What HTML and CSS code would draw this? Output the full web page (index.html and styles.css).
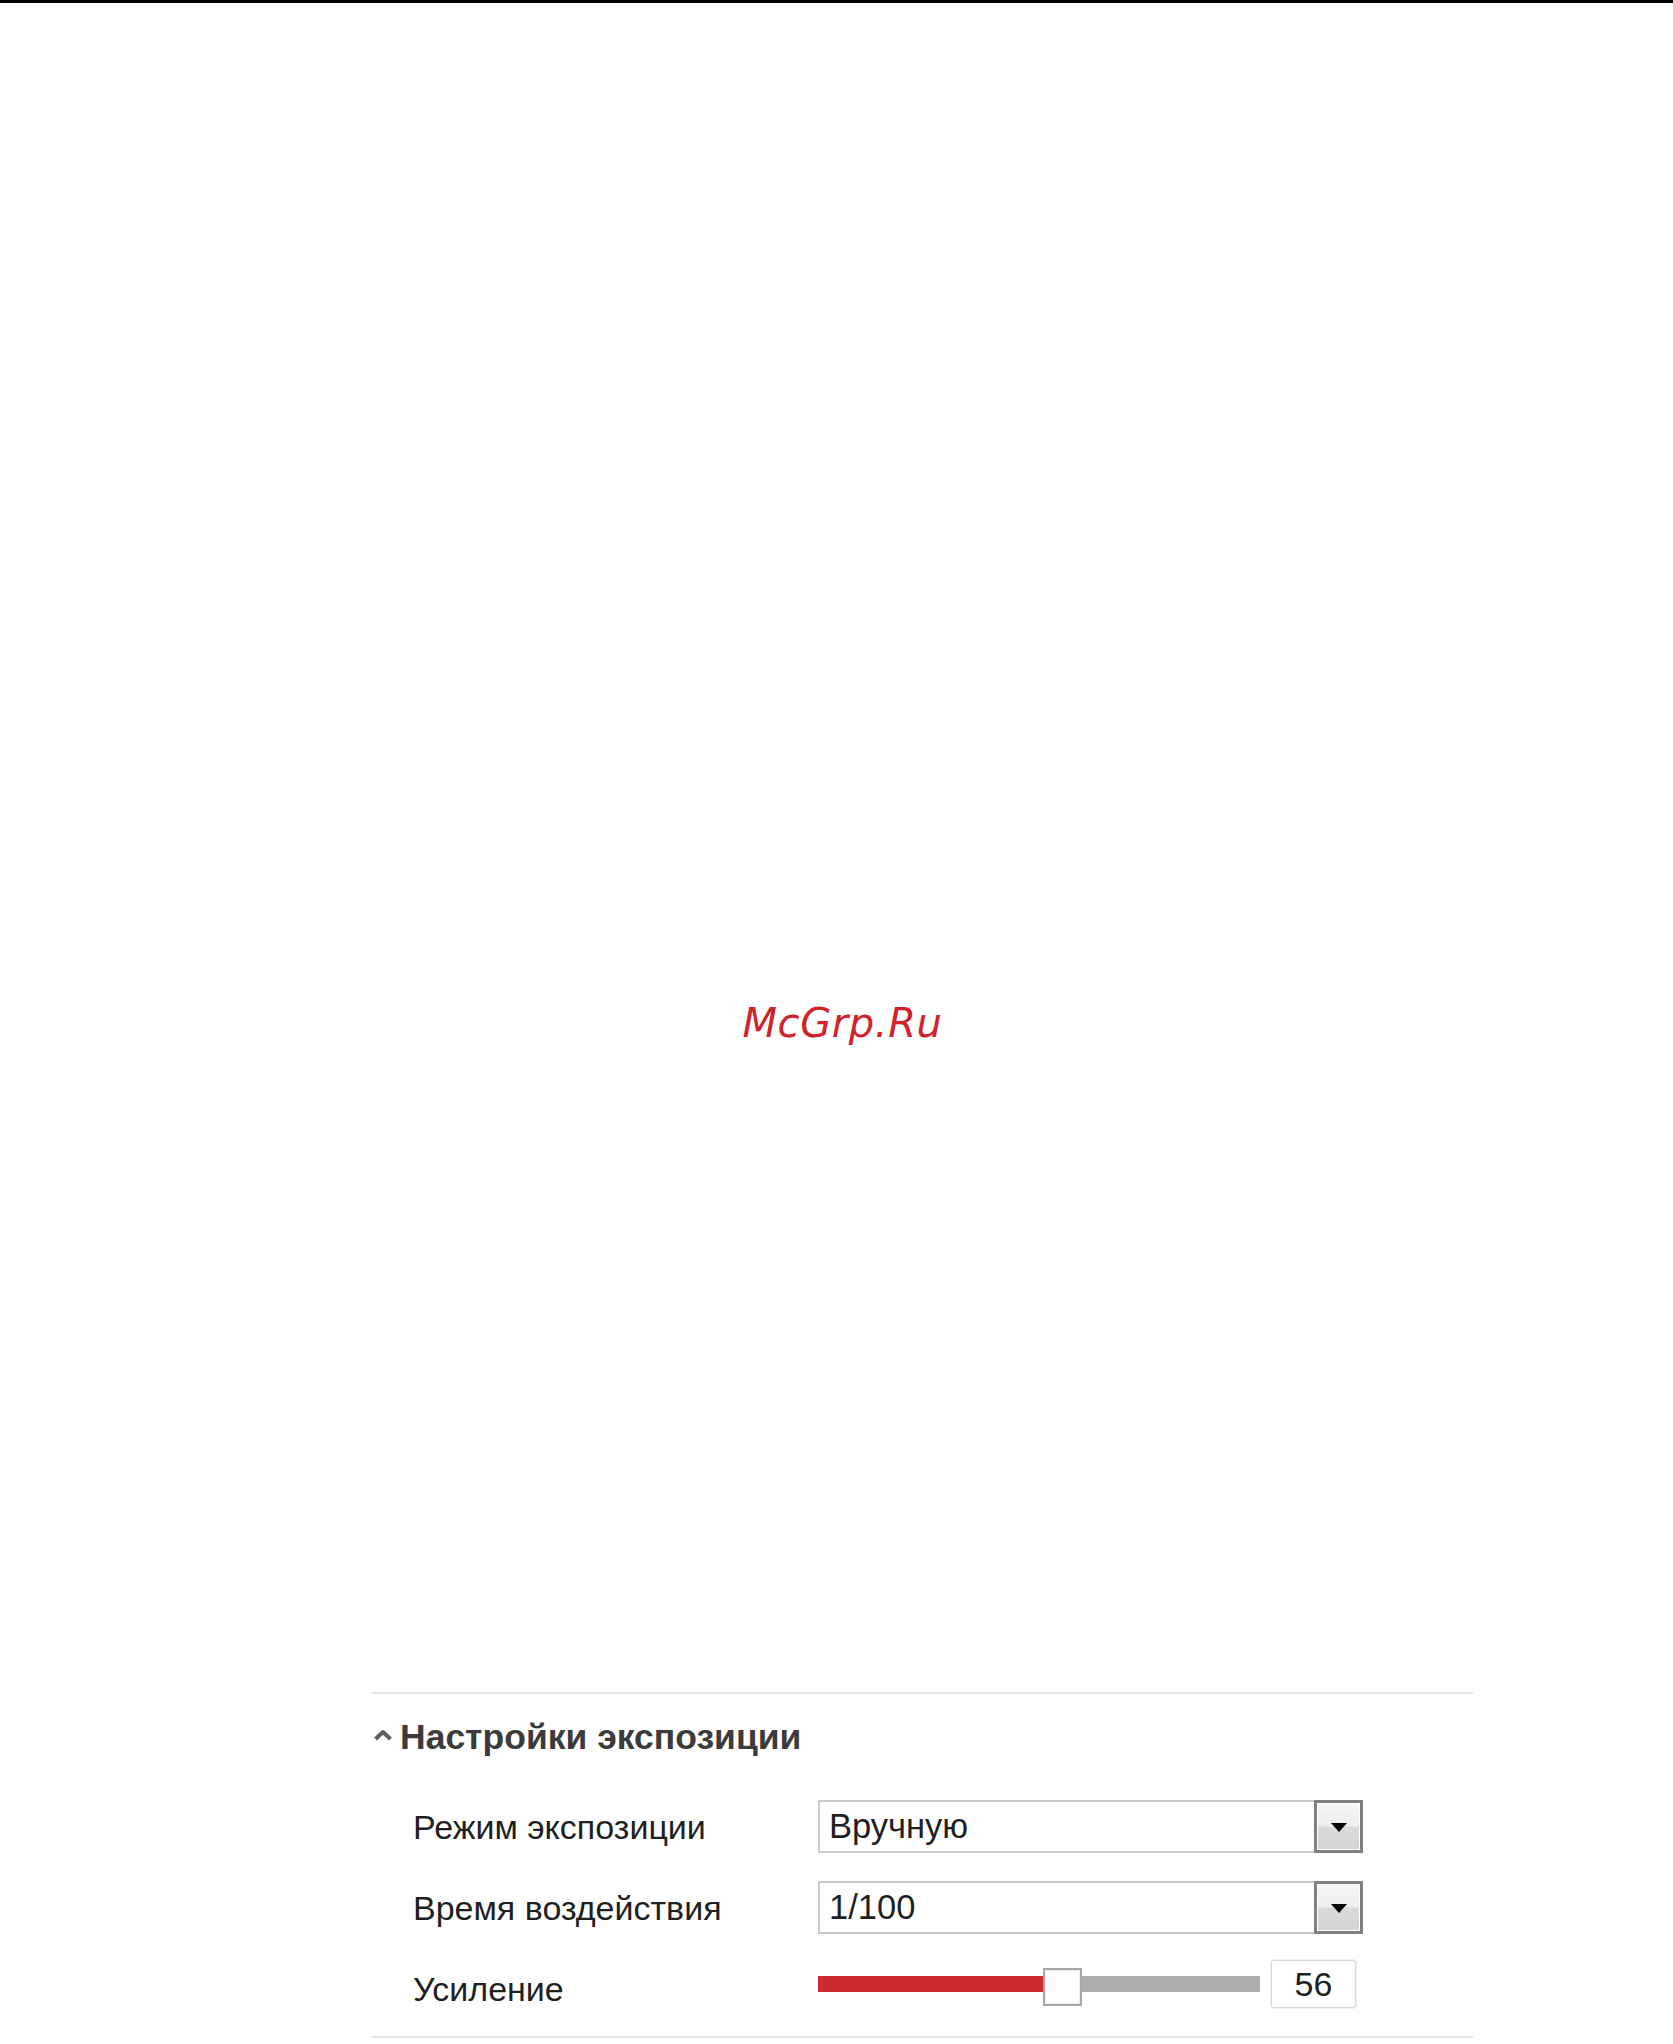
FILE: index.html
```html
<!DOCTYPE html>
<html lang="ru">
<head>
<meta charset="utf-8">
<title>Настройки экспозиции</title>
<link rel="stylesheet" href="styles.css">
</head>
<body>
<div class="rule"></div>
<main class="page">
  <div class="stamp">McGrp.Ru</div>

  <section class="panel">
    <header class="panel-head">
      <svg class="caret" width="22" height="12" viewBox="0 0 22 12" aria-hidden="true">
        <path d="M3.5 10 L11 3 L18.5 10" fill="none" stroke="#5e5e5e" stroke-width="4" stroke-linejoin="round"/>
      </svg>
      <h2 class="panel-title">Настройки экспозиции</h2>
    </header>

    <div class="rows">
      <div class="row">
        <span class="label">Режим экспозиции</span>
        <div class="select">
          <span class="select-value">Вручную</span>
          <span class="select-btn"><span class="tri"></span></span>
        </div>
      </div>

      <div class="row">
        <span class="label">Время воздействия</span>
        <div class="select">
          <span class="select-value">1/100</span>
          <span class="select-btn"><span class="tri"></span></span>
        </div>
      </div>

      <div class="row row-slider">
        <span class="label">Усиление</span>
        <div class="slider-wrap">
          <div class="slider">
            <span class="fill" style="width:225px"></span>
            <span class="thumb"></span>
            <span class="rest"></span>
          </div>
          <span class="num">56</span>
        </div>
      </div>
    </div>
  </section>
</main>
</body>
</html>
```

FILE: styles.css
```css
html, body {
  margin: 0;
  padding: 0;
  background: #fff;
}

body {
  font-family: "Liberation Sans", Arial, sans-serif;
  color: #222;
}

.rule {
  height: 3px;
  background: #000;
}

.page {
  display: flex;
  flex-direction: column;
}

.stamp {
  margin-top: 1000px;
  height: 40px;
  line-height: 40px;
  text-align: center;
  font-family: "DejaVu Sans", sans-serif;
  font-style: oblique;
  font-size: 40px;
  letter-spacing: 0.6px;
  color: #d1232b;
  padding-left: 12px;
}

.panel {
  margin: 649px 0 0 372px;
  width: 1101px;
  border-top: 2px solid #e3e3e3;
  border-bottom: 2px solid #e3e3e3;
  padding-bottom: 28px;
}

.panel-head {
  display: flex;
  align-items: center;
  padding-top: 23px;
  height: 40px;
}

.caret {
  margin-left: 0;
  margin-right: 6px;
  margin-top: -5px;
}

.panel-title {
  margin: 0;
  font-size: 35.5px;
  line-height: 40px;
  font-weight: bold;
  color: #3b3b3b;
}

.rows {
  display: flex;
  flex-direction: column;
  gap: 28px;
  margin-top: 43px;
}

.row {
  display: grid;
  grid-template-columns: 405px 545px;
  align-items: center;
  padding-left: 41px;
}

.row-slider {
  margin-top: -2px;
}

.label {
  font-size: 34px;
  line-height: 40px;
  color: #1f1f1f;
}

/* the gain label sits a little lower than the slider's centre line */
.row-slider .label {
  padding-top: 10px;
  line-height: 30px;
}

.select {
  display: flex;
  height: 53px;
}

.select-value {
  flex: 1;
  border: 2px solid #c9c9c9;
  border-right: 0;
  padding-left: 9px;
  font-size: 34.5px;
  line-height: 49px;
  color: #1f1f1f;
}

.select-btn {
  width: 43px;
  border: 3px solid #808080;
  box-shadow: inset 0 0 0 1px #fff;
  background: linear-gradient(#f6f6f6 0%, #eeeeee 48%, #dadada 52%, #d4d4d4 100%);
  display: flex;
  align-items: center;
  justify-content: center;
}

.tri {
  width: 0;
  height: 0;
  border-left: 8px solid transparent;
  border-right: 8px solid transparent;
  border-top: 9px solid #000;
  margin-top: 2px;
}

.slider-wrap {
  display: flex;
  align-items: center;
}

.slider {
  width: 442px;
  height: 48px;
  display: flex;
  align-items: center;
}

.fill {
  height: 16px;
  background: #cc2a31;
}

.thumb {
  width: 35px;
  height: 34px;
  border: 2px solid #a6a6a6;
  background: #fff;
  box-shadow: inset 0 0 0 1px #ececec;
  margin-top: 5px;
}

.rest {
  flex: 1;
  height: 16px;
  background: #adadad;
}

.num {
  margin-left: 11px;
  width: 83px;
  height: 46px;
  border: 1px solid #d6d6d6;
  border-radius: 3px;
  box-shadow: 0 0 0 1px #eef0f4;
  text-align: center;
  font-size: 34px;
  line-height: 46px;
  color: #1f1f1f;
}
```
